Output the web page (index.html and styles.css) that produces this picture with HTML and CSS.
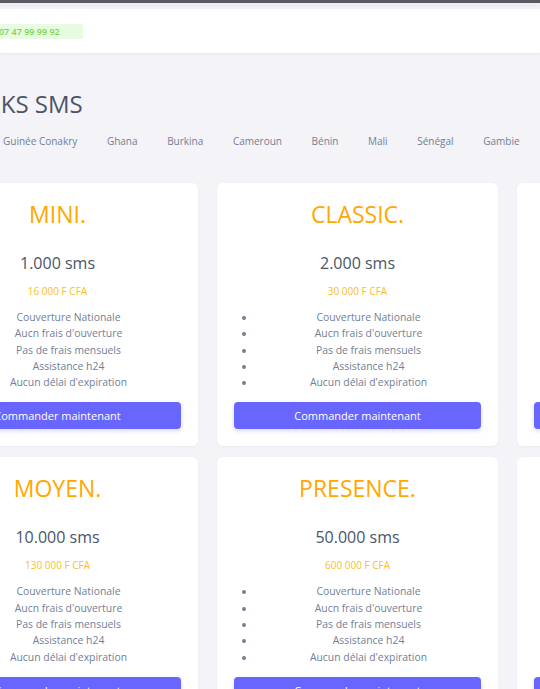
FILE: index.html
```html
<!DOCTYPE html>
<html lang="fr">
<head>
<meta charset="utf-8">
<title>Packs SMS</title>
<link rel="stylesheet" href="styles.css">
</head>
<body>
<div class="topline"></div>
<header class="topbar">
  <span class="phone">+225 07 47 99 99 92</span>
</header>
<main class="wrap">
  <h1 class="title">PACKS SMS</h1>
  <nav class="tabs">
    <span class="tab">Côte d'Ivoire</span>
    <span class="tab">Guinée Conakry</span>
    <span class="tab">Ghana</span>
    <span class="tab">Burkina</span>
    <span class="tab">Cameroun</span>
    <span class="tab">Bénin</span>
    <span class="tab">Mali</span>
    <span class="tab">Sénégal</span>
    <span class="tab">Gambie</span>
  </nav>
  <section class="grid">
    <article class="card">
      <h2 class="name">MINI.</h2>
      <div class="qty">1.000 sms</div>
      <div class="price">16 000 F CFA</div>
      <ul class="feats plain">
        <li>Couverture Nationale</li>
        <li>Aucn frais d'ouverture</li>
        <li>Pas de frais mensuels</li>
        <li>Assistance h24</li>
        <li>Aucun délai d'expiration</li>
      </ul>
      <button class="btn">Commander maintenant</button>
    </article>
    <article class="card">
      <h2 class="name">CLASSIC.</h2>
      <div class="qty">2.000 sms</div>
      <div class="price">30 000 F CFA</div>
      <ul class="feats">
        <li>Couverture Nationale</li>
        <li>Aucn frais d'ouverture</li>
        <li>Pas de frais mensuels</li>
        <li>Assistance h24</li>
        <li>Aucun délai d'expiration</li>
      </ul>
      <button class="btn">Commander maintenant</button>
    </article>
    <article class="card">
      <h2 class="name">STANDARD.</h2>
      <div class="qty">5.000 sms</div>
      <div class="price">70 000 F CFA</div>
      <ul class="feats">
        <li>Couverture Nationale</li>
        <li>Aucn frais d'ouverture</li>
        <li>Pas de frais mensuels</li>
        <li>Assistance h24</li>
        <li>Aucun délai d'expiration</li>
      </ul>
      <button class="btn">Commander maintenant</button>
    </article>
    <article class="card">
      <h2 class="name">MOYEN.</h2>
      <div class="qty">10.000 sms</div>
      <div class="price">130 000 F CFA</div>
      <ul class="feats plain">
        <li>Couverture Nationale</li>
        <li>Aucn frais d'ouverture</li>
        <li>Pas de frais mensuels</li>
        <li>Assistance h24</li>
        <li>Aucun délai d'expiration</li>
      </ul>
      <button class="btn">Commander maintenant</button>
    </article>
    <article class="card">
      <h2 class="name">PRESENCE.</h2>
      <div class="qty">50.000 sms</div>
      <div class="price">600 000 F CFA</div>
      <ul class="feats">
        <li>Couverture Nationale</li>
        <li>Aucn frais d'ouverture</li>
        <li>Pas de frais mensuels</li>
        <li>Assistance h24</li>
        <li>Aucun délai d'expiration</li>
      </ul>
      <button class="btn">Commander maintenant</button>
    </article>
    <article class="card">
      <h2 class="name">PREMIUM.</h2>
      <div class="qty">100.000 sms</div>
      <div class="price">1 100 000 F CFA</div>
      <ul class="feats">
        <li>Couverture Nationale</li>
        <li>Aucn frais d'ouverture</li>
        <li>Pas de frais mensuels</li>
        <li>Assistance h24</li>
        <li>Aucun délai d'expiration</li>
      </ul>
      <button class="btn">Commander maintenant</button>
    </article>
  </section>
</main>
</body>
</html>
```

FILE: styles.css
```css
* { box-sizing: border-box; }
html, body { overflow: hidden; }
body {
  margin: 0;
  background: #f3f3f8;
  font-family: "Open Sans", "Noto Sans", sans-serif;
  color: #4a5568;
}
.topline {
  height: 3px;
  background: #5a5a60;
  margin-bottom: 6px;
  box-shadow: 0 3px 4px #e6e6ee;
}
.topbar {
  height: 44px;
  background: #fff;
  display: flex;
  align-items: center;
  box-shadow: 0 1px 3px rgba(0,0,0,0.06);
}
.phone {
  margin-left: -30px;
  background: #e7fbe0;
  color: #78d64a;
  font-size: 9px;
  font-weight: 600;
  padding: 2px 23px 2px 6px;
  border-radius: 3px;
  line-height: 11px;
}
.wrap {
  margin-left: -83px;
  width: 881px;
}
.title {
  margin: 34px 0 0 39px;
  font-size: 24px;
  font-weight: 400;
  line-height: 34px;
  color: #4a5568;
  white-space: nowrap;
}
.tabs {
  display: flex;
  gap: 29.6px;
  margin: 12px 0 0 -2px;
  font-size: 10px;
  color: #718096;
  white-space: nowrap;
  line-height: 16px;
}
.grid {
  margin-top: 34px;
  display: grid;
  grid-template-columns: repeat(3, 281px);
  column-gap: 19px;
  row-gap: 11px;
}
.card {
  background: #fff;
  border-radius: 6px;
  box-shadow: 0 1px 3px rgba(0,0,0,0.04);
  padding: 16px 17px 17px;
  text-align: center;
}
.name {
  margin: 0;
  font-size: 23px;
  font-weight: 400;
  line-height: 30px;
  color: #ffa800;
}
.qty {
  margin-top: 22px;
  font-size: 16px;
  line-height: 24px;
  color: #4a5568;
}
.price {
  margin-top: 9px;
  font-size: 10px;
  line-height: 14px;
  color: #fbbd2b;
}
.feats {
  margin: 11px 0 0;
  padding-left: 22px;
  font-size: 10.4px;
  line-height: 16.3px;
  color: #718096;
}
.feats.plain { list-style: none; }
.btn {
  margin-top: 12px;
  width: 100%;
  height: 27px;
  border: 0;
  border-radius: 4px;
  background: #6866ff;
  color: #fff;
  font-family: inherit;
  font-size: 11px;
  box-shadow: 0 2px 4px rgba(104,102,255,0.25);
}
```
